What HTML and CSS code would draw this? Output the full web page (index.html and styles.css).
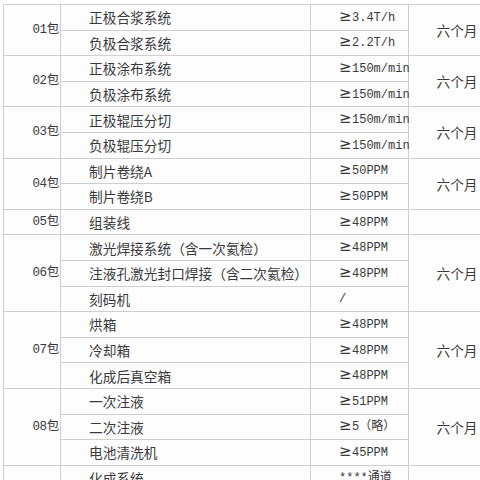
FILE: index.html
```html
<!DOCTYPE html>
<html lang="zh">
<head>
<meta charset="utf-8">
<link rel="stylesheet" href="styles.css">
</head>
<body>
<div class="wrap">
<table class="spec">
<colgroup><col class="c1"><col class="c2"><col class="c3"><col class="c4"></colgroup>
<tbody>
<tr><td class="pkg" rowspan="2">01包</td><td class="name">正极合浆系统</td><td class="val"><span class="ge">≥</span>3.4T/h</td><td class="time" rowspan="2">六个月</td></tr>
<tr><td class="name">负极合浆系统</td><td class="val"><span class="ge">≥</span>2.2T/h</td></tr>
<tr><td class="pkg" rowspan="2">02包</td><td class="name">正极涂布系统</td><td class="val"><span class="ge">≥</span>150m/min</td><td class="time" rowspan="2">六个月</td></tr>
<tr><td class="name">负极涂布系统</td><td class="val"><span class="ge">≥</span>150m/min</td></tr>
<tr><td class="pkg" rowspan="2">03包</td><td class="name">正极辊压分切</td><td class="val"><span class="ge">≥</span>150m/min</td><td class="time" rowspan="2">六个月</td></tr>
<tr><td class="name">负极辊压分切</td><td class="val"><span class="ge">≥</span>150m/min</td></tr>
<tr><td class="pkg" rowspan="2">04包</td><td class="name">制片卷绕A</td><td class="val"><span class="ge">≥</span>50PPM</td><td class="time" rowspan="2">六个月</td></tr>
<tr><td class="name">制片卷绕B</td><td class="val"><span class="ge">≥</span>50PPM</td></tr>
<tr><td class="pkg">05包</td><td class="name">组装线</td><td class="val"><span class="ge">≥</span>48PPM</td><td class="time"></td></tr>
<tr><td class="pkg" rowspan="3">06包</td><td class="name">激光焊接系统（含一次氦检）</td><td class="val"><span class="ge">≥</span>48PPM</td><td class="time" rowspan="3">六个月</td></tr>
<tr><td class="name">注液孔激光封口焊接（含二次氦检）</td><td class="val"><span class="ge">≥</span>48PPM</td></tr>
<tr><td class="name">刻码机</td><td class="val">/</td></tr>
<tr><td class="pkg" rowspan="3">07包</td><td class="name">烘箱</td><td class="val"><span class="ge">≥</span>48PPM</td><td class="time" rowspan="3">六个月</td></tr>
<tr><td class="name">冷却箱</td><td class="val"><span class="ge">≥</span>48PPM</td></tr>
<tr><td class="name">化成后真空箱</td><td class="val"><span class="ge">≥</span>48PPM</td></tr>
<tr><td class="pkg" rowspan="3">08包</td><td class="name">一次注液</td><td class="val"><span class="ge">≥</span>51PPM</td><td class="time" rowspan="3">六个月</td></tr>
<tr><td class="name">二次注液</td><td class="val"><span class="ge">≥</span>5（略）</td></tr>
<tr><td class="name">电池清洗机</td><td class="val"><span class="ge">≥</span>45PPM</td></tr>
<tr><td class="pkg" rowspan="2"></td><td class="name">化成系统</td><td class="val">****通道</td><td class="time" rowspan="2"></td></tr>
<tr><td class="name"></td><td class="val"></td></tr>
</tbody>
</table>
</div>
</body>
</html>
```

FILE: styles.css
```css
html, body {
  margin: 0;
  padding: 0;
  background: #ffffff;
  overflow: hidden;
}

.wrap {
  padding: 4px 0 0 3px;
  width: 510px;
}

.spec {
  border-collapse: collapse;
  table-layout: fixed;
  width: 502px;
  color: #3a3a3a;
  font-family: "Noto Sans CJK SC", "Noto Sans", sans-serif;
  font-size: 13.7px;
  background: #fdfdfe;
}

.c1 { width: 57px; }
.c2 { width: 250px; }
.c3 { width: 98px; }
.c4 { width: 97px; }

.spec tr {
  height: 25.6px;
}

.spec td {
  border: 1px solid #cfcfcf;
  padding: 0;
  vertical-align: middle;
  white-space: nowrap;
  overflow: visible;
  line-height: 18px;
}

.pkg {
  text-align: right;
  padding-right: 1px !important;
  font-family: "Liberation Mono", "Noto Sans CJK SC", monospace;
  font-size: 12.5px;
  letter-spacing: -0.3px;
}

.name {
  padding-left: 28px !important;
}

.val {
  padding-left: 28px !important;
  font-family: "Liberation Mono", "Noto Sans CJK SC", monospace;
  font-size: 12px;
}

.ge {
  display: inline-block;
  width: 13px;
  font-family: "DejaVu Sans", "Noto Sans CJK SC", sans-serif;
  font-size: 15px;
  line-height: 16px;
  text-align: left;
}

.time {
  text-align: center;
}
```
